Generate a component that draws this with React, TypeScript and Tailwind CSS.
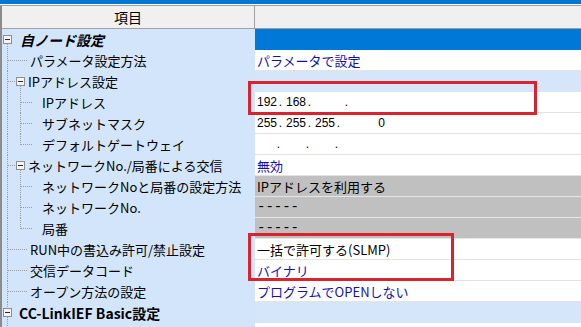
import type { ReactNode } from "react";

type Tone = "sel" | "white" | "group" | "gray";
type VA = "full" | "below" | "above" | "both";
type VB = "full" | "below" | "half";
type Hz = "l1leaf" | "l1box" | "l2leaf";

interface Row {
  label: string;
  textX: number;
  box?: "l0" | "l1";
  a?: VA;
  b?: VB;
  h?: Hz;
  strong?: "bi" | "b";
  tone: Tone;
  value?: ReactNode;
  blue?: boolean;
}

const LINE = "#9c9c9c";

function Ip({ parts }: { parts: [string, number, "r" | "c"][] }) {
  return (
    <div className="flex font-['Liberation_Sans',sans-serif] text-[12px] text-black">
      {parts.map(([t, w, a], i) => (
        <span
          key={i}
          className={a === "r" ? "text-right whitespace-pre" : "text-center whitespace-pre"}
          style={{ width: w }}
        >
          {t}
        </span>
      ))}
    </div>
  );
}

const Dashes = () => (
  <span className="font-['Liberation_Mono',monospace] text-[14px] leading-none text-black">-----</span>
);

const ROWS: Row[] = [
  { label: "自ノード設定", textX: 20, box: "l0", a: "below", strong: "bi", tone: "sel" },
  { label: "パラメータ設定方法", textX: 30, a: "full", h: "l1leaf", tone: "white", value: "パラメータで設定", blue: true },
  { label: "IPアドレス設定", textX: 28, box: "l1", a: "full", b: "below", h: "l1box", tone: "group" },
  {
    label: "IPアドレス",
    textX: 42,
    a: "full",
    b: "full",
    h: "l2leaf",
    tone: "white",
    value: (
      <Ip
        parts={[
          ["192", 18, "r"],
          [".", 11, "c"],
          ["168", 18, "r"],
          [".", 11, "c"],
          ["", 26, "r"],
          [".", 11, "c"],
        ]}
      />
    ),
  },
  {
    label: "サブネットマスク",
    textX: 42,
    a: "full",
    b: "full",
    h: "l2leaf",
    tone: "white",
    value: (
      <Ip
        parts={[
          ["255", 18, "r"],
          [".", 11, "c"],
          ["255", 18, "r"],
          [".", 11, "c"],
          ["255", 18, "r"],
          [".", 11, "c"],
          ["0", 41, "r"],
        ]}
      />
    ),
  },
  {
    label: "デフォルトゲートウェイ",
    textX: 42,
    a: "full",
    b: "half",
    h: "l2leaf",
    tone: "white",
    value: (
      <Ip
        parts={[
          ["", 16, "r"],
          [".", 11, "c"],
          ["", 18, "r"],
          [".", 11, "c"],
          ["", 18, "r"],
          [".", 11, "c"],
        ]}
      />
    ),
  },
  { label: "ネットワークNo./局番による交信", textX: 28, box: "l1", a: "full", b: "below", h: "l1box", tone: "white", value: "無効", blue: true },
  { label: "ネットワークNoと局番の設定方法", textX: 42, a: "full", b: "full", h: "l2leaf", tone: "gray", value: "IPアドレスを利用する" },
  { label: "ネットワークNo.", textX: 42, a: "full", b: "full", h: "l2leaf", tone: "gray", value: <Dashes /> },
  { label: "局番", textX: 42, a: "full", b: "half", h: "l2leaf", tone: "gray", value: <Dashes /> },
  { label: "RUN中の書込み許可/禁止設定", textX: 30, a: "full", h: "l1leaf", tone: "white", value: "一括で許可する(SLMP)" },
  { label: "交信データコード", textX: 30, a: "full", h: "l1leaf", tone: "white", value: "バイナリ", blue: true },
  { label: "オープン方法の設定", textX: 30, a: "full", h: "l1leaf", tone: "white", value: "プログラムでOPENしない", blue: true },
  { label: "CC-LinkIEF Basic設定", textX: 19, box: "l0", a: "both", strong: "b", tone: "group" },
  { label: "CC-Link IEF Basicの使用有無", textX: 30, a: "full", h: "l1leaf", tone: "white", value: "使用しない", blue: true },
];

const TONE: Record<Tone, string> = {
  sel: "bg-[#0078d7] border-[#0078d7]",
  white: "bg-white border-[#e3e3e3]",
  group: "bg-[#d5e6fa] border-[#d5e6fa]",
  gray: "bg-[#c0c0c0] border-[#e6e6e6]",
};

function ExpandBox({ x }: { x: number }) {
  return (
    <g shapeRendering="crispEdges">
      <rect x={x + 0.5} y={6.5} width={8} height={8} fill="#f4f4f4" stroke="#8e8e8e" />
      <line x1={x + 2} x2={x + 7} y1={10.5} y2={10.5} stroke="#2b2b2b" />
    </g>
  );
}

function Gutter({ row }: { row: Row }) {
  const w = row.textX - 2;
  const dot = { stroke: LINE, strokeDasharray: "1 1", shapeRendering: "crispEdges" as const };
  return (
    <svg width={w} height={21} className="shrink-0 overflow-visible">
      {/* root-level connector */}
      {row.a === "full" && <line x1={5.5} x2={5.5} y1={0} y2={21} {...dot} />}
      {row.a === "below" && <line x1={5.5} x2={5.5} y1={15} y2={21} {...dot} />}
      {row.a === "both" && (
        <>
          <line x1={5.5} x2={5.5} y1={0} y2={6} {...dot} />
          <line x1={5.5} x2={5.5} y1={15} y2={21} {...dot} />
        </>
      )}
      {/* second-level connector */}
      {row.b === "full" && <line x1={18.5} x2={18.5} y1={0} y2={21} {...dot} />}
      {row.b === "below" && <line x1={18.5} x2={18.5} y1={15} y2={21} {...dot} />}
      {row.b === "half" && <line x1={18.5} x2={18.5} y1={0} y2={11} {...dot} />}
      {row.h === "l1leaf" && <line x1={6} x2={25} y1={10.5} y2={10.5} {...dot} />}
      {row.h === "l1box" && <line x1={6} x2={14} y1={10.5} y2={10.5} {...dot} />}
      {row.h === "l2leaf" && <line x1={19} x2={31} y1={10.5} y2={10.5} {...dot} />}
      {row.box === "l0" && <ExpandBox x={1} />}
      {row.box === "l1" && <ExpandBox x={14} />}
    </svg>
  );
}

function TreeRow({ row }: { row: Row }) {
  const labelCls =
    row.strong === "bi"
      ? "font-bold italic text-[14px]"
      : row.strong === "b"
        ? "font-bold text-[14px]"
        : "text-[13px]";
  return (
    <>
      <div className="flex h-[21px] items-center bg-[#d3e5fa]">
        <Gutter row={row} />
        <span className={`whitespace-nowrap leading-none text-black ${labelCls}`}>{row.label}</span>
      </div>
      <div className={`flex h-[21px] items-center border-b pl-[2px] ${TONE[row.tone]}`}>
        {typeof row.value === "string" ? (
          <span className={`whitespace-nowrap text-[13px] leading-none ${row.blue ? "text-[#1212b4]" : "text-black"}`}>
            {row.value}
          </span>
        ) : (
          row.value
        )}
      </div>
    </>
  );
}

export default function App() {
  return (
    <div className="relative h-[327px] w-[581px] overflow-hidden bg-white font-['Noto_Sans_CJK_JP','Liberation_Sans',sans-serif]">
      <div className="h-[4px] bg-[#0078d7]" />
      <div className="h-[1px] bg-white" />
      <div className="h-[1px] bg-[#a0a0a0]" />
      <div className="border-l-2 border-[#8c8c8c]">
        {/* column header */}
        <div className="grid h-[23px] grid-cols-[253px_1fr] border-b border-[#a0a0a0] bg-[#f0f0f0]">
          <div className="flex items-center justify-center border-r border-[#a0a0a0] text-[14px] leading-none text-black">
            項目
          </div>
          <div />
        </div>
        <div className="grid grid-cols-[253px_1fr]">
          {ROWS.map((r) => (
            <TreeRow key={r.label} row={r} />
          ))}
        </div>
      </div>

      {/* highlight frames */}
      <div className="pointer-events-none absolute left-[248px] top-[81px] h-[34px] w-[289px] border-[3px] border-[#d9232e]" />
      <div className="pointer-events-none absolute left-[248px] top-[233px] h-[48px] w-[206px] border-[3px] border-[#d9232e]" />
    </div>
  );
}
